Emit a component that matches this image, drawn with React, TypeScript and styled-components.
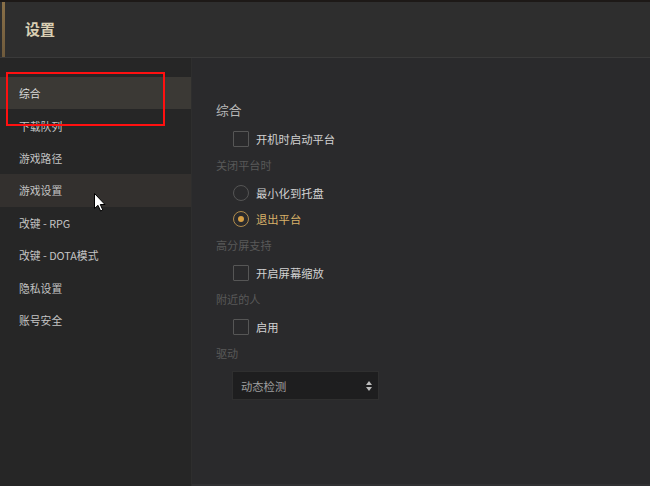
import React from "react";
import styled, { createGlobalStyle } from "styled-components";

const Global = createGlobalStyle`
  html, body { margin: 0; padding: 0; background: #2a2a2c; }
  body { width: 650px; height: 486px; overflow: hidden; font-family: "Noto Sans CJK SC", "Noto Sans", sans-serif; }
  #root { width: 650px; height: 486px; }
`;

const Window = styled.div`
  width: 650px;
  height: 486px;
  display: flex;
  flex-direction: column;
  background: #2a2a2c;
  border-top: 2px solid #1d1917;
  box-sizing: border-box;
  position: relative;
`;

const Header = styled.div`
  height: 55px;
  flex: none;
  display: flex;
  align-items: center;
  background: #2e2e2e;
  border-bottom: 1px solid #3a3a3a;
  padding-left: 2px;
`;

const GoldBar = styled.div`
  width: 3px;
  align-self: stretch;
  background: linear-gradient(#8a7048, #6e5a3c);
`;

const Title = styled.div`
  margin-left: 20px;
  margin-top: -2px;
  font-size: 15px;
  font-weight: 700;
  color: #d9cfb3;
`;

const Body = styled.div`
  flex: 1;
  display: flex;
  min-height: 0;
`;

const Sidebar = styled.div`
  width: 192px;
  flex: none;
  background: #262626;
  border-right: 1px solid #2e2e2e;
  padding-top: 19px;
  box-sizing: border-box;
  display: flex;
  flex-direction: column;
`;

const NavItem = styled.div<{ $state?: "active" | "hover" }>`
  height: 32.4px;
  display: flex;
  align-items: center;
  padding-left: 19px;
  font-size: 10.8px;
  white-space: pre;
  color: ${(p) => (p.$state === "active" ? "#dcdcdc" : "#c4c4c4")};
  background: ${(p) =>
    p.$state === "active" ? "#3b3935" : p.$state === "hover" ? "#33302e" : "transparent"};
`;

const Main = styled.div`
  flex: 1;
  background: #2a2a2c;
  border-bottom: 2px solid #313133;
  padding: 42px 0 0 24px;
  box-sizing: border-box;
  display: flex;
  flex-direction: column;
`;

const Heading = styled.div`
  height: 20px;
  line-height: 20px;
  font-size: 12.8px;
  color: #b8b8b8;
  margin-bottom: 9px;
`;

const GroupLabel = styled.div`
  height: 20px;
  line-height: 20px;
  font-size: 11.1px;
  color: #595959;
  margin-bottom: 8px;
`;

const Option = styled.div<{ $on?: boolean }>`
  height: 20px;
  display: flex;
  align-items: center;
  gap: 7px;
  padding-left: 17px;
  margin-bottom: 6px;
  font-size: 11.3px;
  color: ${(p) => (p.$on ? "#d8b169" : "#d2d2d2")};
`;

const Box = styled.div`
  width: 14px;
  height: 14px;
  border: 1px solid #565656;
  border-radius: 1px;
  box-sizing: content-box;
`;

const Radio = styled.div<{ $on?: boolean }>`
  width: 14px;
  height: 14px;
  border-radius: 50%;
  border: 1px solid ${(p) => (p.$on ? "#b08b4c" : "#555555")};
  display: flex;
  align-items: center;
  justify-content: center;
  &::after {
    content: "";
    width: 6px;
    height: 6px;
    border-radius: 50%;
    background: ${(p) => (p.$on ? "#d59e44" : "transparent")};
  }
`;

const Select = styled.div`
  margin-left: 16px;
  width: 147px;
  height: 29px;
  box-sizing: border-box;
  background: #1e1e1f;
  border: 1px solid #2f2f2f;
  display: flex;
  align-items: center;
  justify-content: space-between;
  padding: 0 6px 0 8px;
  font-size: 11.3px;
  color: #a0a0a0;
`;

const Arrows = styled.svg`
  width: 6px;
  height: 10px;
`;

const RedFrame = styled.div`
  position: absolute;
  left: 6px;
  top: 70px;
  width: 159px;
  height: 54px;
  border: 2px solid #ff1010;
  box-sizing: border-box;
  pointer-events: none;
`;

const Cursor = styled.svg`
  position: absolute;
  left: 94px;
  top: 191px;
  width: 12px;
  height: 19px;
`;

const navs: { label: string; state?: "active" | "hover" }[] = [
  { label: "综合", state: "active" },
  { label: "下载队列" },
  { label: "游戏路径" },
  { label: "游戏设置", state: "hover" },
  { label: "改键 - RPG" },
  { label: "改键 - DOTA模式" },
  { label: "隐私设置" },
  { label: "账号安全" },
];

export default function App() {
  return (
    <>
      <Global />
      <Window>
        <Header>
          <GoldBar />
          <Title>设置</Title>
        </Header>
        <Body>
          <Sidebar>
            {navs.map((n) => (
              <NavItem key={n.label} $state={n.state}>
                {n.label}
              </NavItem>
            ))}
          </Sidebar>
          <Main>
            <Heading>综合</Heading>
            <Option>
              <Box />
              开机时启动平台
            </Option>
            <GroupLabel>关闭平台时</GroupLabel>
            <Option>
              <Radio />
              最小化到托盘
            </Option>
            <Option $on>
              <Radio $on />
              退出平台
            </Option>
            <GroupLabel>高分屏支持</GroupLabel>
            <Option>
              <Box />
              开启屏幕缩放
            </Option>
            <GroupLabel>附近的人</GroupLabel>
            <Option>
              <Box />
              启用
            </Option>
            <GroupLabel>驱动</GroupLabel>
            <Select>
              动态检测
              <Arrows viewBox="0 0 6 10">
                <path d="M3 0 L6 4 H0 Z" fill="#bdbdbd" />
                <path d="M0 6 H6 L3 10 Z" fill="#bdbdbd" />
              </Arrows>
            </Select>
          </Main>
        </Body>
        <RedFrame />
        <Cursor viewBox="0 0 12 19">
          <path
            d="M0.5 0.5 L0.5 15.5 L4 12.3 L6.6 18 L8.8 17 L6.3 11.5 L11 11.5 Z"
            fill="#ffffff"
            stroke="#000000"
            strokeWidth="1"
            strokeLinejoin="round"
          />
        </Cursor>
      </Window>
    </>
  );
}
